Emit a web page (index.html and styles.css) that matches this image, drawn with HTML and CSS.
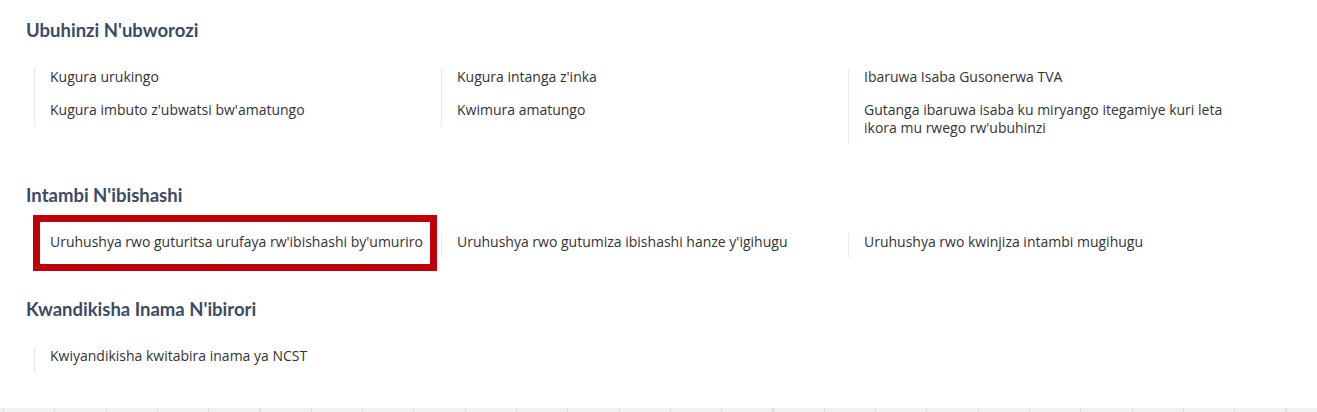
FILE: index.html
```html
<!DOCTYPE html>
<html lang="rw">
<head>
    <meta charset="UTF-8">
    <title>Serivisi</title>
    <link rel="stylesheet" href="styles.css">
</head>
<body>
    <div class="content-wrapper">
        <div class="service-group">
            <h2>Ubuhinzi N'ubworozi</h2>
            <div class="service-grid">
                <ul class="service-list">
                    <li><a href="#">Kugura urukingo</a></li>
                    <li><a href="#">Kugura imbuto z'ubwatsi bw'amatungo</a></li>
                </ul>
                <ul class="service-list">
                    <li><a href="#">Kugura intanga z'inka</a></li>
                    <li><a href="#">Kwimura amatungo</a></li>
                </ul>
                <ul class="service-list">
                    <li><a href="#">Ibaruwa Isaba Gusonerwa TVA</a></li>
                    <li><a href="#">Gutanga ibaruwa isaba ku miryango itegamiye kuri leta ikora mu rwego rw'ubuhinzi</a></li>
                </ul>
            </div>
        </div>

        <div class="service-group">
            <h2>Intambi N'ibishashi</h2>
            <div class="service-grid">
                <ul class="service-list">
                    <li class="highlighted"><a href="#">Uruhushya rwo guturitsa urufaya rw'ibishashi by'umuriro</a></li>
                </ul>
                <ul class="service-list">
                    <li><a href="#">Uruhushya rwo gutumiza ibishashi hanze y'igihugu</a></li>
                </ul>
                <ul class="service-list">
                    <li><a href="#">Uruhushya rwo kwinjiza intambi mugihugu</a></li>
                </ul>
            </div>
        </div>

        <div class="service-group">
            <h2>Kwandikisha Inama N'ibirori</h2>
            <div class="service-grid">
                <ul class="service-list">
                    <li><a href="#">Kwiyandikisha kwitabira inama ya NCST</a></li>
                </ul>
            </div>
        </div>
    </div>
    <div class="table-head"></div>
</body>
</html>
```

FILE: styles.css
```css
* {
    margin: 0;
    padding: 0;
    box-sizing: border-box;
}

body {
    font-family: "Open Sans", "Noto Sans", sans-serif;
    font-size: 14px;
    line-height: 18px;
    color: #333;
    background: white;
}

.content-wrapper {
    padding: 18px 0 0 26px;
}

.service-group {
    margin-bottom: 39px;
}

.service-group:last-child {
    margin-bottom: 36px;
}

.service-group h2 {
    font-family: Lato, sans-serif;
    font-size: 18.5px;
    line-height: 24px;
    font-weight: 700;
    color: #3b4b66;
    margin-bottom: 26px;
}

.service-grid {
    display: grid;
    grid-template-columns: repeat(3, 407px);
    margin-left: 8px;
}

.service-list {
    list-style: none;
    border-left: 1px solid #e4ecf7;
    padding: 0 15px 7px 15px;
    align-self: start;
    display: flex;
    flex-direction: column;
    gap: 15px;
}

.service-list a {
    color: #333;
    text-decoration: none;
}

.highlighted {
    position: relative;
}

.highlighted::after {
    content: "";
    box-sizing: border-box;
    position: absolute;
    left: -17px;
    top: -18px;
    width: 404px;
    height: 56px;
    border: 7px solid #c00008;
}

.table-head {
    height: 4px;
    background-color: #f1f1f1;
    background-image: repeating-linear-gradient(to right, #dedede 0, #dedede 1px, transparent 1px, transparent 51.3px);
    background-position: 3px 0;
}
```
